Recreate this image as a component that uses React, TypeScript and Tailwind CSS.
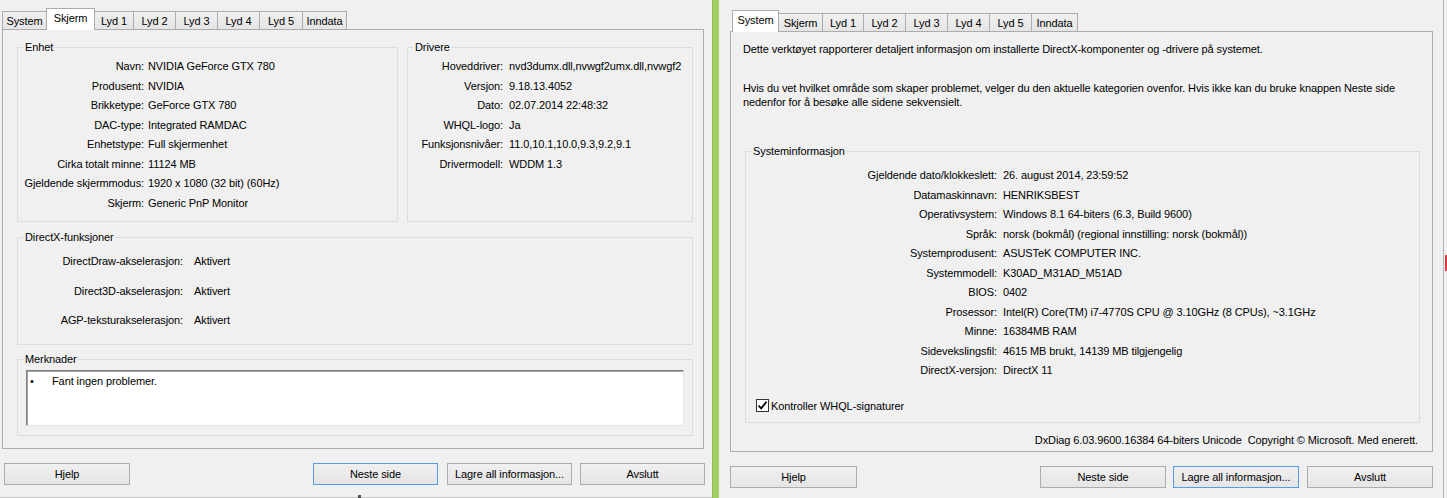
import React from "react";

type TabDef = { label: string; w: string; selected?: boolean };

function TabStrip({ tabs }: { tabs: TabDef[] }) {
  return (
    <div className="flex items-end h-[21px] pl-[2px]">
      {tabs.map((t, i) =>
        t.selected ? (
          <div
            key={t.label}
            className={`${t.w} ${i === 0 ? "" : "-ml-px"} relative z-10 -mb-px h-[22px] border-t border-l border-r border-[#acacac] bg-white flex justify-center pt-[2px] leading-[14px]`}
          >
            {t.label}
          </div>
        ) : (
          <div
            key={t.label}
            className={`${t.w} ${i === 0 ? "" : "-ml-px"} h-[18px] border-t border-l border-r border-[#acacac] bg-linear-to-b from-[#f0f0f0] to-[#e5e5e5] flex items-center justify-center leading-[14px]`}
          >
            {t.label}
          </div>
        )
      )}
    </div>
  );
}

function Btn({ label, w, focused, cls }: { label: string; w: string; focused?: boolean; cls?: string }) {
  return (
    <div
      className={`${w} ${cls ?? ""} h-[22px] border ${
        focused ? "border-[#569de5]" : "border-[#acacac]"
      } bg-linear-to-b from-[#f0f0f0] to-[#e5e5e5] flex items-center justify-center leading-[14px]`}
    >
      {label}
    </div>
  );
}

function Legend({ children }: { children: React.ReactNode }) {
  return <legend className="ml-[6px] px-[1px] leading-[14px]">{children}</legend>;
}

const leftTabs: TabDef[] = [
  { label: "System", w: "w-[45px]" },
  { label: "Skjerm", w: "w-[49px]", selected: true },
  { label: "Lyd 1", w: "w-[40px]" },
  { label: "Lyd 2", w: "w-[43px]" },
  { label: "Lyd 3", w: "w-[43px]" },
  { label: "Lyd 4", w: "w-[43px]" },
  { label: "Lyd 5", w: "w-[44px]" },
  { label: "Inndata", w: "w-[45px]" },
];

const rightTabs: TabDef[] = [
  { label: "System", w: "w-[47px]", selected: true },
  { label: "Skjerm", w: "w-[45px]" },
  { label: "Lyd 1", w: "w-[42px]" },
  { label: "Lyd 2", w: "w-[43px]" },
  { label: "Lyd 3", w: "w-[43px]" },
  { label: "Lyd 4", w: "w-[43px]" },
  { label: "Lyd 5", w: "w-[43px]" },
  { label: "Inndata", w: "w-[47px]" },
];

const enhet: [string, string][] = [
  ["Navn:", "NVIDIA GeForce GTX 780"],
  ["Produsent:", "NVIDIA"],
  ["Brikketype:", "GeForce GTX 780"],
  ["DAC-type:", "Integrated RAMDAC"],
  ["Enhetstype:", "Full skjermenhet"],
  ["Cirka totalt minne:", "11124 MB"],
  ["Gjeldende skjermmodus:", "1920 x 1080 (32 bit) (60Hz)"],
  ["Skjerm:", "Generic PnP Monitor"],
];

const drivere: [string, string][] = [
  ["Hoveddriver:", "nvd3dumx.dll,nvwgf2umx.dll,nvwgf2"],
  ["Versjon:", "9.18.13.4052"],
  ["Dato:", "02.07.2014 22:48:32"],
  ["WHQL-logo:", "Ja"],
  ["Funksjonsnivåer:", "11.0,10.1,10.0,9.3,9.2,9.1"],
  ["Drivermodell:", "WDDM 1.3"],
];

const dx: [string, string][] = [
  ["DirectDraw-akselerasjon:", "Aktivert"],
  ["Direct3D-akselerasjon:", "Aktivert"],
  ["AGP-teksturakselerasjon:", "Aktivert"],
];

const sysinfo: [string, string][] = [
  ["Gjeldende dato/klokkeslett:", "26. august 2014, 23:59:52"],
  ["Datamaskinnavn:", "HENRIKSBEST"],
  ["Operativsystem:", "Windows 8.1 64-biters (6.3, Build 9600)"],
  ["Språk:", "norsk (bokmål) (regional innstilling: norsk (bokmål))"],
  ["Systemprodusent:", "ASUSTeK COMPUTER INC."],
  ["Systemmodell:", "K30AD_M31AD_M51AD"],
  ["BIOS:", "0402"],
  ["Prosessor:", "Intel(R) Core(TM) i7-4770S CPU @ 3.10GHz (8 CPUs), ~3.1GHz"],
  ["Minne:", "16384MB RAM"],
  ["Sidevekslingsfil:", "4615 MB brukt, 14139 MB tilgjengelig"],
  ["DirectX-versjon:", "DirectX 11"],
];

function LeftWindow() {
  return (
    <div className="w-[712px] h-full flex flex-col pt-[8px]">
      <TabStrip tabs={leftTabs} />
      <div className="ml-[2px] w-[702px] h-[420px] border border-[#acacac] bg-[#f0f0f0] pt-[10px] pl-[14px]">
        <div className="flex gap-[9px]">
          <fieldset className="w-[381px] h-[182px] border border-[#dcdcdc] min-w-0">
            <Legend>Enhet</Legend>
            <div className="grid grid-cols-[126px_1fr] gap-x-[4px] auto-rows-[19.5px] items-center pt-[3px] leading-[13px]">
              {enhet.map(([l, v]) => (
                <React.Fragment key={l}>
                  <div className="text-right whitespace-nowrap">{l}</div>
                  <div className="whitespace-nowrap">{v}</div>
                </React.Fragment>
              ))}
            </div>
          </fieldset>
          <fieldset className="w-[286px] h-[182px] border border-[#dcdcdc] min-w-0">
            <Legend>Drivere</Legend>
            <div className="grid grid-cols-[95px_1fr] gap-x-[6px] auto-rows-[19.5px] items-center pt-[3px] leading-[13px]">
              {drivere.map(([l, v]) => (
                <React.Fragment key={l}>
                  <div className="text-right whitespace-nowrap">{l}</div>
                  <div className="whitespace-nowrap overflow-hidden">{v}</div>
                </React.Fragment>
              ))}
            </div>
          </fieldset>
        </div>
        <fieldset className="mt-[8px] w-[676px] h-[115px] border border-[#dcdcdc] min-w-0">
          <Legend>DirectX-funksjoner</Legend>
          <div className="grid grid-cols-[165px_1fr] gap-x-[11px] auto-rows-[29.5px] items-center pt-[3px] leading-[13px]">
            {dx.map(([l, v]) => (
              <React.Fragment key={l}>
                <div className="text-right whitespace-nowrap">{l}</div>
                <div className="whitespace-nowrap">{v}</div>
              </React.Fragment>
            ))}
          </div>
        </fieldset>
        <fieldset className="mt-[7px] w-[676px] h-[84px] border border-[#dcdcdc] min-w-0">
          <Legend>Merknader</Legend>
          <div className="ml-[8px] mt-[4px] w-[658px] h-[56px] bg-white border border-t-[#828282] border-l-[#828282] border-r-[#e3e3e3] border-b-[#e3e3e3] shadow-[inset_1px_1px_0_#a0a0a0] pt-[3px] pl-[3px] flex leading-[14px]">
            <span className="w-[22px]">•</span>
            <span>Fant ingen problemer.</span>
          </div>
        </fieldset>
      </div>
      <div className="mt-[14px] ml-[2px] w-[703px] flex items-center">
        <Btn label="Hjelp" w="w-[126px]" cls="ml-[2px]" />
        <div className="flex-1" />
        <Btn label="Neste side" w="w-[125px]" focused />
        <Btn label="Lagre all informasjon..." w="w-[125px]" cls="ml-[9px]" />
        <Btn label="Avslutt" w="w-[125px]" cls="ml-[8px]" />
      </div>
      <div className="mt-auto h-px bg-[#c8c8c8] relative">
        <div className="absolute left-[358px] -top-[2px] w-[3px] h-[3px] bg-[#505050]" />
      </div>
    </div>
  );
}

function RightWindow() {
  return (
    <div className="w-[724px] h-full flex flex-col pt-[10px] pl-[11px]">
      <TabStrip tabs={rightTabs} />
      <div className="w-[703px] h-[421px] border border-[#acacac] bg-[#f0f0f0] pt-[10px] pl-[12px] leading-[14px]">
        <div>Dette verktøyet rapporterer detaljert informasjon om installerte DirectX-komponenter og -drivere på systemet.</div>
        <div className="mt-[25px]">
          Hvis du vet hvilket område som skaper problemet, velger du den aktuelle kategorien ovenfor. Hvis ikke kan du bruke knappen Neste side
          <br />
          nedenfor for å besøke alle sidene sekvensielt.
        </div>
        <fieldset className="mt-[35px] ml-[2px] w-[675px] h-[279px] border border-[#dcdcdc] min-w-0">
          <Legend>Systeminformasjon</Legend>
          <div className="grid grid-cols-[251px_1fr] gap-x-[6px] auto-rows-[19.5px] items-center pt-[8px] leading-[13px]">
            {sysinfo.map(([l, v]) => (
              <React.Fragment key={l}>
                <div className="text-right whitespace-nowrap">{l}</div>
                <div className="whitespace-nowrap">{v}</div>
              </React.Fragment>
            ))}
          </div>
          <div className="mt-[18px] ml-[10px] flex items-center gap-[2px]">
            <div className="w-[13px] h-[13px] border border-[#333333] bg-white flex items-center justify-center">
              <svg width="11" height="11" viewBox="0 0 11 11">
                <path d="M1.5 5.5 L4.2 8.3 L9.5 1.8" fill="none" stroke="#000" strokeWidth="1.8" />
              </svg>
            </div>
            <span>Kontroller WHQL-signaturer</span>
          </div>
        </fieldset>
        <div className="mt-[10px] ml-[2px] w-[675px] text-right pr-[2px] whitespace-nowrap">
          DxDiag 6.03.9600.16384 64-biters Unicode&nbsp;&nbsp;Copyright © Microsoft. Med enerett.
        </div>
      </div>
      <div className="mt-[14px] w-[703px] flex items-center">
        <Btn label="Hjelp" w="w-[127px]" />
        <div className="flex-1" />
        <Btn label="Neste side" w="w-[126px]" />
        <Btn label="Lagre all informasjon..." w="w-[126px]" focused cls="ml-[7px]" />
        <Btn label="Avslutt" w="w-[126px]" cls="ml-[8px]" />
      </div>
    </div>
  );
}

export default function App() {
  return (
    <div className="w-[1447px] h-[498px] overflow-hidden flex bg-[#f0f0f0] text-black text-[11px] tracking-[-0.1px] font-['Liberation_Sans',Arial,sans-serif]">
      <LeftWindow />
      <div className="w-[7px] h-full bg-[#a3d063] border-l border-[#8fbf50]" />
      <RightWindow />
      <div className="w-[4px] h-full border-l border-[#b4b4b4] bg-[#f0f0f0] flex flex-col">
        <div className="h-[255px]" />
        <div className="h-[16px] w-[2px] ml-[1px] bg-[#d04040]" />
      </div>
    </div>
  );
}
